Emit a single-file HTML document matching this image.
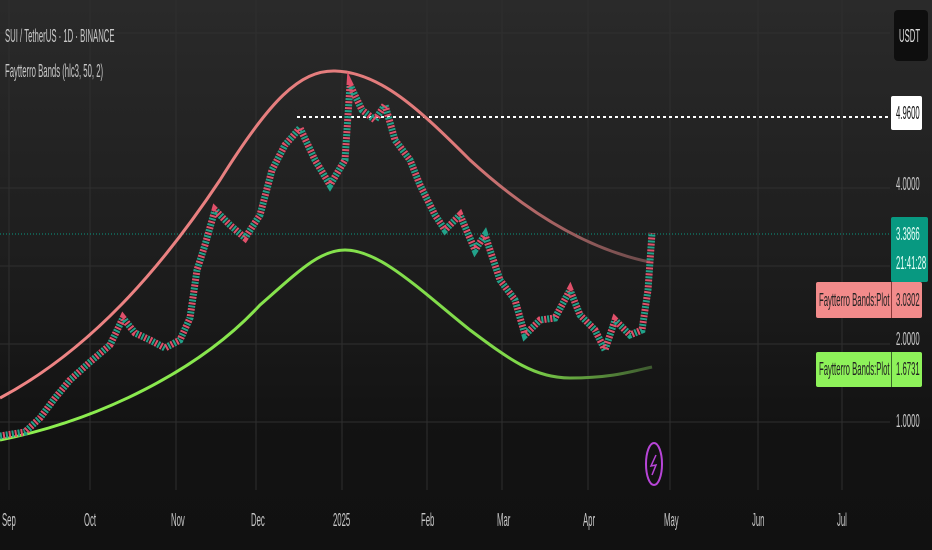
<!DOCTYPE html>
<html><head><meta charset="utf-8"><style>
html,body{margin:0;padding:0}
body{width:932px;height:550px;overflow:hidden;background:linear-gradient(#2a2a2a 0%,#1e1e1e 45%,#121212 80%,#111 100%);font-family:"Liberation Sans",sans-serif;position:relative}
.t{position:absolute;white-space:nowrap;transform-origin:0 0;transform:scaleX(0.43);color:#c8c8c8;font-size:18px;line-height:18px}
.box{position:absolute;box-sizing:border-box}
</style></head><body>
<svg width="932" height="550" style="position:absolute;left:0;top:0">
<g stroke="#2f2f2f" stroke-width="1">
<line x1="0" y1="33" x2="890" y2="33"/><line x1="0" y1="188" x2="890" y2="188"/>
<line x1="0" y1="266" x2="890" y2="266"/><line x1="0" y1="344" x2="890" y2="344"/><line x1="0" y1="422" x2="890" y2="422"/>
<line x1="9" y1="0" x2="9" y2="490"/><line x1="90" y1="0" x2="90" y2="490"/><line x1="176" y1="0" x2="176" y2="490"/><line x1="256" y1="0" x2="256" y2="490"/><line x1="342" y1="0" x2="342" y2="490"/><line x1="427" y1="0" x2="427" y2="490"/><line x1="502" y1="0" x2="502" y2="490"/><line x1="588" y1="0" x2="588" y2="490"/><line x1="670" y1="0" x2="670" y2="490"/><line x1="758" y1="0" x2="758" y2="490"/><line x1="842" y1="0" x2="842" y2="490"/>
</g>
<line x1="0" y1="234" x2="890" y2="234" stroke="#089981" stroke-width="1" stroke-dasharray="1 2"/>
<line x1="297" y1="117" x2="890" y2="117" stroke="#fff" stroke-width="2" stroke-dasharray="3 3"/>
<defs><linearGradient id="ug" x1="0" x2="1"><stop offset="0" stop-color="#f08585"/><stop offset="0.7" stop-color="#e07a7a"/><stop offset="1" stop-color="#6a4a4a"/></linearGradient>
<linearGradient id="lg" x1="0" x2="1"><stop offset="0" stop-color="#8ef050"/><stop offset="0.8" stop-color="#7fd84a"/><stop offset="1" stop-color="#3e5a30"/></linearGradient></defs>
<path d="M0,398 C90,350 160,270 220,180 C270,100 300,70 335,71 C380,72 420,110 470,160 C530,215 590,250 650,262" fill="none" stroke="url(#ug)" stroke-width="3"/>
<path d="M0,440 C100,420 200,370 260,305 C300,270 320,250 345,250 C380,250 420,290 470,330 C510,360 535,378 570,378 C610,378 630,372 652,367" fill="none" stroke="url(#lg)" stroke-width="3"/>
<g fill="none">
<polyline points="0,436 25,432 40,418 55,398 70,380 90,362 110,345 123,318 135,333 150,340 165,348 180,340 190,318 197,270 205,245 215,210 230,225 245,238 260,215 272,170 285,145 300,128 315,160 330,185 345,160 350,85 362,110 375,120 385,105 395,140 410,160 420,185 435,215 445,230 460,215 475,250 485,235 500,280 515,300 525,335 540,320 555,318 570,290 580,315 595,330 605,350 615,320 630,335 642,330 648,290 652,233" stroke="#22a28a" stroke-width="7" stroke-dasharray="2 4"/>
<polyline points="0,436 25,432 40,418 55,398 70,380 90,362 110,345 123,318 135,333 150,340 165,348 180,340 190,318 197,270 205,245 215,210 230,225 245,238 260,215 272,170 285,145 300,128 315,160 330,185 345,160 350,85 362,110 375,120 385,105 395,140 410,160 420,185 435,215 445,230 460,215 475,250 485,235 500,280 515,300 525,335 540,320 555,318 570,290 580,315 595,330 605,350 615,320 630,335 642,330 648,290 652,233" stroke="#e0506a" stroke-width="7" stroke-dasharray="2 4" stroke-dashoffset="3"/>
</g>
<ellipse cx="654" cy="464" rx="8" ry="21" fill="none" stroke="#b845d8" stroke-width="2"/>
<path d="M656,455 L651,466 L656,465 L652,475" fill="none" stroke="#b845d8" stroke-width="1.5"/>
</svg>
<div class="t" style="left:5px;top:27px">SUI / TetherUS · 1D · BINANCE</div>
<div class="t" style="left:5px;top:62px">Faytterro Bands (hlc3, 50, 2)</div>
<div class="box" style="left:894px;top:10px;width:34px;height:51px;background:#0e0e0e;border-radius:4px"></div>
<div class="t" style="left:899px;top:27px;color:#ddd">USDT</div>
<div class="box" style="left:891px;top:96px;width:31px;height:34px;background:#fff;border-radius:2px"></div>
<div class="t" style="left:896px;top:104px;color:#111">4.9600</div>
<div class="t" style="left:896px;top:175px">4.0000</div>
<div class="box" style="left:891px;top:217px;width:37px;height:65px;background:#089981;border-radius:2px"></div>
<div class="t" style="left:896px;top:225px;color:#e8fff8">3.3866</div>
<div class="t" style="left:896px;top:254px;color:#e8fff8">21:41:28</div>
<div class="box" style="left:816px;top:282px;width:106px;height:36px;background:#f28b8b;border-radius:2px"></div>
<div class="box" style="left:891px;top:282px;width:1px;height:36px;background:#8a3a3a"></div>
<div class="t" style="left:819px;top:291px;color:#222">Faytterro Bands:Plot</div>
<div class="t" style="left:896px;top:291px;color:#222">3.0302</div>
<div class="t" style="left:896px;top:330px">2.0000</div>
<div class="box" style="left:816px;top:352px;width:106px;height:35px;background:#8ef25a;border-radius:2px"></div>
<div class="box" style="left:891px;top:352px;width:1px;height:35px;background:#3a6a2a"></div>
<div class="t" style="left:819px;top:360px;color:#222">Faytterro Bands:Plot</div>
<div class="t" style="left:896px;top:360px;color:#222">1.6731</div>
<div class="t" style="left:896px;top:412px">1.0000</div>
<div class="t" style="left:2px;top:511px">Sep</div>
<div class="t" style="left:84px;top:511px">Oct</div>
<div class="t" style="left:171px;top:511px">Nov</div>
<div class="t" style="left:251px;top:511px">Dec</div>
<div class="t" style="left:333px;top:511px">2025</div>
<div class="t" style="left:421px;top:511px">Feb</div>
<div class="t" style="left:497px;top:511px">Mar</div>
<div class="t" style="left:583px;top:511px">Apr</div>
<div class="t" style="left:664px;top:511px">May</div>
<div class="t" style="left:752px;top:511px">Jun</div>
<div class="t" style="left:837px;top:511px">Jul</div>
</body></html>
